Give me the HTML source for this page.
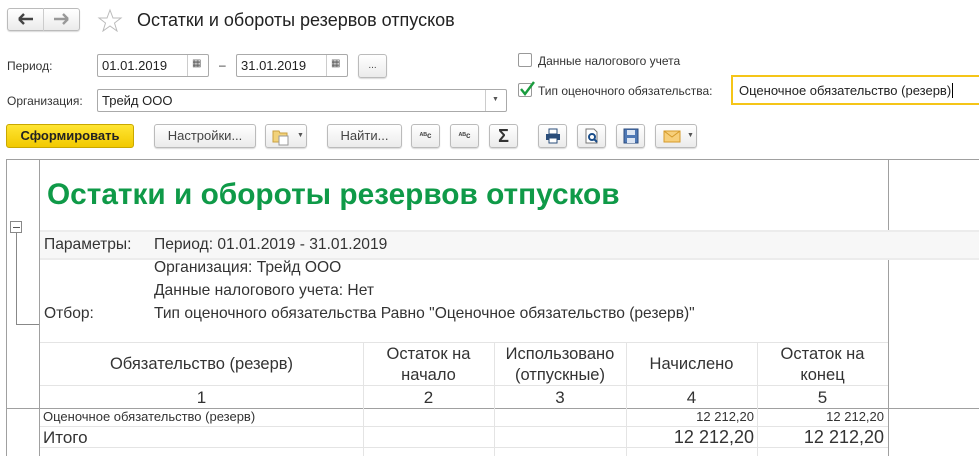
<!DOCTYPE html><html><head><meta charset="utf-8"><style>
*{margin:0;padding:0;box-sizing:border-box}
body{width:979px;height:456px;overflow:hidden;background:#fff;font-family:"Liberation Sans",Arial,sans-serif;font-size:12px;color:#333;position:relative}
.a{position:absolute;white-space:nowrap}
.btn{position:absolute;height:24px;border:1px solid #bbb;border-radius:3px;background:linear-gradient(#fff,#ebebeb);box-shadow:0 1px 1px rgba(0,0,0,.15);font-size:13px;color:#444;text-align:center;line-height:22px}
.inp{position:absolute;height:23px;border:1px solid #aaa;border-radius:2px;background:#fff;font-size:13px;line-height:21px;padding-left:4px;color:#222}
.hl{position:absolute;height:1px;background:#e4e4e4}
.vl{position:absolute;width:1px;background:#e4e4e4}
.rep{font-size:15.6px;color:#333}
.c{position:absolute;text-align:center;font-family:"Liberation Sans Narrow","Liberation Sans",sans-serif;font-size:16.5px;color:#333;line-height:21px}
</style></head><body>
<div class="btn" style="left:7px;top:8px;width:73px;height:23px"></div>
<div class="a" style="left:43px;top:8px;width:1px;height:23px;background:#ccc"></div>
<svg class="a" style="left:17px;top:12px" width="18" height="14"><path d="M2 7H16M2 7L7 2M2 7L7 12" stroke="#444" stroke-width="2.4" fill="none"/></svg>
<svg class="a" style="left:52px;top:12px" width="18" height="14"><path d="M2 7H16M16 7L11 2M16 7L11 12" stroke="#999" stroke-width="2.4" fill="none"/></svg>
<svg class="a" style="left:97px;top:8px" width="26" height="24"><path d="M13 2L16 10L24 10L17.5 15L20 23L13 18L6 23L8.5 15L2 10L10 10Z" stroke="#bbb" stroke-width="1" fill="none"/></svg>
<div class="a" style="left:137px;top:10px;font-size:18px;color:#222">Остатки и обороты резервов отпусков</div>

<div class="a" style="left:7px;top:59px;font-size:12px">Период:</div>
<div class="inp" style="left:97px;top:54px;width:112px">01.01.2019</div>
<div class="a" style="left:187px;top:55px;width:1px;height:21px;background:#ccc"></div>
<div class="a" style="left:192px;top:58px;font-size:10px;color:#555">▦</div>
<div class="a" style="left:219px;top:58px">–</div>
<div class="inp" style="left:236px;top:54px;width:112px">31.01.2019</div>
<div class="a" style="left:326px;top:55px;width:1px;height:21px;background:#ccc"></div>
<div class="a" style="left:331px;top:58px;font-size:10px;color:#555">▦</div>
<div class="btn" style="left:358px;top:54px;width:29px;font-size:10px">...</div>

<div class="a" style="left:7px;top:94px">Организация:</div>
<div class="inp" style="left:97px;top:89px;width:410px">Трейд ООО</div>
<div class="a" style="left:485px;top:90px;width:1px;height:21px;background:#ccc"></div>
<div class="a" style="left:492px;top:96px;font-size:7px;color:#555">▼</div>

<div class="a" style="left:518px;top:53px;width:14px;height:14px;border:1px solid #999;border-radius:2px;background:#fff"></div>
<div class="a" style="left:538px;top:54px">Данные налогового учета</div>
<div class="a" style="left:518px;top:83px;width:14px;height:14px;border:1px solid #999;border-radius:2px;background:#fff"></div>
<svg class="a" style="left:519px;top:80px" width="16" height="16"><path d="M2 9L6 14L15 2" stroke="#1a9c3e" stroke-width="2.4" fill="none"/></svg>
<div class="a" style="left:538px;top:84px">Тип оценочного обязательства:</div>
<div class="a" style="left:731px;top:75px;width:248px;height:30px;border:2px solid #f5c518;border-right:none;background:#fff"></div>
<div class="a" style="left:739px;top:83px;font-size:13px;color:#222">Оценочное обязательство (резерв)<span style="border-left:1px solid #000;margin-left:1px"></span></div>

<div class="a" style="left:6px;top:124px;width:128px;height:24px;border:1px solid #c9a800;border-radius:3px;background:linear-gradient(#ffe533,#f2c900);font-weight:bold;font-size:13px;color:#222;text-align:center;line-height:22px">Сформировать</div>
<div class="btn" style="left:154px;top:124px;width:102px">Настройки...</div>
<div class="btn" style="left:265px;top:124px;width:42px;text-align:left;padding-left:6px"><svg width="18" height="18" style="margin-top:3px"><path d="M1 3H7L8 5H15V14H1Z" fill="#f2d27a" stroke="#c9a040"/><rect x="7" y="8" width="9" height="9" fill="#fff" stroke="#999"/></svg><span style="font-size:7px;color:#555;position:absolute;left:31px;top:0">▼</span></div>
<div class="btn" style="left:327px;top:124px;width:75px">Найти...</div>
<div class="btn" style="left:411px;top:124px;width:29px;font-size:8px;font-weight:bold">ᴬᴮc</div>
<div class="btn" style="left:450px;top:124px;width:29px;font-size:8px;font-weight:bold">ᴬᴮc</div>
<div class="btn" style="left:489px;top:124px;width:29px;font-size:18px;color:#333;font-weight:bold">Σ</div>
<div class="btn" style="left:538px;top:124px;width:29px"><svg width="16" height="16" style="margin-top:3px"><rect x="4" y="1" width="8" height="5" fill="#fff" stroke="#2a4d7a"/><rect x="1" y="6" width="14" height="6" fill="#2a4d7a"/><rect x="4" y="10" width="8" height="5" fill="#fff" stroke="#2a4d7a"/></svg></div>
<div class="btn" style="left:577px;top:124px;width:29px"><svg width="16" height="16" style="margin-top:3px"><path d="M2 1H10L13 4V15H2Z" fill="#fff" stroke="#777"/><circle cx="8" cy="9" r="3" fill="none" stroke="#1a4d8a" stroke-width="2"/><path d="M10 11L13 14" stroke="#1a4d8a" stroke-width="2"/></svg></div>
<div class="btn" style="left:616px;top:124px;width:29px"><svg width="16" height="16" style="margin-top:3px"><rect x="1" y="1" width="14" height="14" fill="#4e78b5" stroke="#2c4d80"/><rect x="4" y="2" width="8" height="5" fill="#dde6f3"/><rect x="4" y="10" width="8" height="5" fill="#dde6f3"/></svg></div>
<div class="btn" style="left:655px;top:124px;width:42px;text-align:left;padding-left:7px"><svg width="18" height="14" style="margin-top:4px"><rect x="1" y="2" width="16" height="11" fill="#f7cf7a" stroke="#d49a2a"/><path d="M1 2L9 8L17 2" stroke="#d49a2a" fill="none"/></svg><span style="font-size:7px;color:#555;position:absolute;left:31px;top:0">▼</span></div>

<!-- report -->
<div class="a" style="left:6px;top:159px;width:973px;height:1px;background:#a0a0a0"></div>
<div class="a" style="left:6px;top:159px;width:1px;height:297px;background:#a0a0a0"></div>
<div class="a" style="left:39px;top:160px;width:1px;height:296px;background:#a0a0a0"></div>
<div class="a" style="left:888px;top:160px;width:1px;height:296px;background:#a0a0a0"></div>
<div class="a" style="left:6px;top:408px;width:973px;height:1px;background:#a0a0a0"></div>
<div class="a" style="left:10px;top:221px;width:12px;height:12px;border:1px solid #888;background:#fff"></div>
<div class="a" style="left:13px;top:227px;width:7px;height:1px;background:#555"></div>
<div class="a" style="left:16px;top:233px;width:1px;height:92px;background:#888"></div>
<div class="a" style="left:16px;top:324px;width:23px;height:1px;background:#888"></div>

<div class="a" style="left:47px;top:178px;font-size:29.8px;font-weight:bold;color:#0f9a48">Остатки и обороты резервов отпусков</div>
<div class="a" style="left:40px;top:230px;width:939px;height:30px;background:#f7f7f7;border-top:2px solid #ececec;border-bottom:2px solid #ececec"></div>
<div class="a rep" style="left:44px;top:236px">Параметры:</div>
<div class="a rep" style="left:154px;top:236px">Период: 01.01.2019 - 31.01.2019</div>
<div class="a rep" style="left:154px;top:259px">Организация: Трейд ООО</div>
<div class="a rep" style="left:154px;top:282px">Данные налогового учета: Нет</div>
<div class="a rep" style="left:44px;top:305px">Отбор:</div>
<div class="a rep" style="left:154px;top:305px">Тип оценочного обязательства Равно "Оценочное обязательство (резерв)"</div>

<div class="hl" style="left:40px;top:342px;width:848px"></div>
<div class="hl" style="left:40px;top:385px;width:848px"></div>
<div class="hl" style="left:40px;top:426px;width:848px"></div>
<div class="hl" style="left:40px;top:447px;width:848px"></div>
<div class="vl" style="left:363px;top:342px;height:114px"></div>
<div class="vl" style="left:494px;top:342px;height:114px"></div>
<div class="vl" style="left:626px;top:342px;height:114px"></div>
<div class="vl" style="left:757px;top:342px;height:114px"></div>

<div class="c" style="left:40px;top:354px;width:323px">Обязательство (резерв)</div>
<div class="c" style="left:363px;top:344px;width:131px">Остаток на<br>начало</div>
<div class="c" style="left:494px;top:344px;width:132px">Использовано<br>(отпускные)</div>
<div class="c" style="left:626px;top:354px;width:131px">Начислено</div>
<div class="c" style="left:757px;top:344px;width:131px">Остаток на<br>конец</div>
<div class="c" style="left:40px;top:387px;width:323px;font-size:17px">1</div>
<div class="c" style="left:363px;top:387px;width:131px;font-size:17px">2</div>
<div class="c" style="left:494px;top:387px;width:132px;font-size:17px">3</div>
<div class="c" style="left:626px;top:387px;width:131px;font-size:17px">4</div>
<div class="c" style="left:757px;top:387px;width:131px;font-size:17px">5</div>
<div class="c" style="left:43px;top:409px;font-size:13px;line-height:16px;text-align:left">Оценочное обязательство (резерв)</div>
<div class="c" style="left:626px;top:409px;width:128px;font-size:13px;line-height:16px;text-align:right">12 212,20</div>
<div class="c" style="left:757px;top:409px;width:127px;font-size:13px;line-height:16px;text-align:right">12 212,20</div>
<div class="c" style="left:43px;top:427px;font-size:17px;text-align:left">Итого</div>
<div class="c" style="left:626px;top:427px;width:128px;font-size:18px;text-align:right">12 212,20</div>
<div class="c" style="left:757px;top:427px;width:127px;font-size:18px;text-align:right">12 212,20</div>
</body></html>
